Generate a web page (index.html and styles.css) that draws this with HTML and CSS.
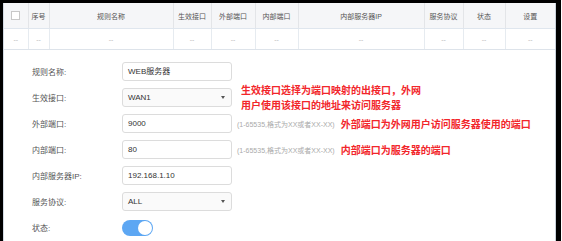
FILE: index.html
```html
<!DOCTYPE html>
<html lang="zh-CN">
<head>
  <meta charset="UTF-8" />
  <title>端口映射</title>
  <link rel="stylesheet" href="styles.css">
</head>
<body>
  <div class="window">
    <div class="panel">
      <table class="rules">
        <colgroup>
          <col style="width:24px"><col style="width:21px"><col style="width:124px"><col style="width:38px"><col style="width:44px">
          <col style="width:43px"><col style="width:126px"><col style="width:39px"><col style="width:42px"><col style="width:50px">
        </colgroup>
        <thead>
          <tr>
            <th><span class="check"></span></th>
            <th>序号</th>
            <th>规则名称</th>
            <th>生效接口</th>
            <th>外部端口</th>
            <th>内部端口</th>
            <th>内部服务器IP</th>
            <th>服务协议</th>
            <th>状态</th>
            <th>设置</th>
          </tr>
        </thead>
        <tbody>
          <tr>
            <td>--</td><td>--</td><td>--</td><td>--</td><td>--</td>
            <td>--</td><td>--</td><td>--</td><td>--</td><td>--</td>
          </tr>
        </tbody>
      </table>

      <div class="form">
        <div class="row">
          <label>规则名称:</label>
          <div class="field">WEB服务器</div>
        </div>
        <div class="row">
          <label>生效接口:</label>
          <div class="field select">WAN1<span class="arrow"></span></div>
          <div class="note note-near">生效接口选择为端口映射的出接口，外网<br>用户使用该接口的地址来访问服务器</div>
        </div>
        <div class="row">
          <label>外部端口:</label>
          <div class="field">9000</div>
          <span class="hint">(1-65535,格式为XX或者XX-XX)</span>
          <div class="note">外部端口为外网用户访问服务器使用的端口</div>
        </div>
        <div class="row">
          <label>内部端口:</label>
          <div class="field">80</div>
          <span class="hint">(1-65535,格式为XX或者XX-XX)</span>
          <div class="note">内部端口为服务器的端口</div>
        </div>
        <div class="row">
          <label>内部服务器IP:</label>
          <div class="field">192.168.1.10</div>
        </div>
        <div class="row">
          <label>服务协议:</label>
          <div class="field select">ALL<span class="arrow"></span></div>
        </div>
        <div class="row">
          <label>状态:</label>
          <div class="toggle"><span class="knob"></span></div>
        </div>
      </div>
    </div>
  </div>
</body>
</html>
```

FILE: styles.css
```css
/* Page frame */
body {
  margin: 0;
  background: #fff;
  font-family: "Liberation Sans", "Noto Sans CJK SC", sans-serif;
}

.window {
  width: 553px;
  height: 238px;
  border-top: 3px solid #000;
  border-left: 3px solid #000;
  border-right: 5px solid #000;
  overflow: hidden;
}

.panel {
  height: 100%;
  border-left: 1px solid #d3dbe4;
  border-right: 1px solid #c9d1da;
}

/* Rules table */
.rules {
  width: 551px;
  table-layout: fixed;
  border-collapse: collapse;
  font-size: 7px;
}

.rules th {
  height: 25px;
  padding: 0;
  background: #f5f6f8;
  color: #555;
  font-weight: normal;
  border-right: 1px solid #e3e5e8;
  border-bottom: 1px solid #dfe6ee;
}

.rules td {
  height: 20px;
  padding: 0;
  text-align: center;
  color: #bbb;
  border-right: 1px solid #e6ebf0;
  border-bottom: 1px solid #dde3ea;
}

.rules th:last-child,
.rules td:last-child {
  border-right: none;
}

.check {
  display: inline-block;
  width: 7px;
  height: 7px;
  border: 1px solid #c8c8c8;
  background: #fff;
  vertical-align: middle;
}

/* Form */
.form {
  padding: 12px 0 0 28px;
  display: flex;
  flex-direction: column;
  gap: 7px;
}

.row {
  display: flex;
  align-items: center;
  height: 19px;
}

.row label {
  width: 90px;
  font-size: 8px;
  color: #555;
}

.field {
  box-sizing: border-box;
  width: 110px;
  height: 19px;
  padding: 0 5px;
  border: 1px solid #dcdcdc;
  border-radius: 3px;
  background: #fff;
  font-size: 8px;
  line-height: 17px;
  color: #333;
  position: relative;
}

.select {
  background: #fafafa;
}

.arrow {
  position: absolute;
  right: 6px;
  top: 7px;
  border-left: 2.5px solid transparent;
  border-right: 2.5px solid transparent;
  border-top: 3px solid #555;
}

.hint {
  margin-left: 5px;
  font-size: 7px;
  color: #aaa;
  white-space: nowrap;
}

.note {
  margin-left: 6px;
  font-size: 10px;
  font-weight: bold;
  color: #f2262b;
  white-space: nowrap;
}

.note-near {
  margin-left: 9px;
  line-height: 15px;
}

.toggle {
  box-sizing: border-box;
  width: 31px;
  height: 16px;
  border-radius: 8px;
  background: #5da7f3;
  padding: 1px;
  display: flex;
  justify-content: flex-end;
}

.knob {
  width: 14px;
  height: 14px;
  border-radius: 50%;
  background: #fff;
}
```
